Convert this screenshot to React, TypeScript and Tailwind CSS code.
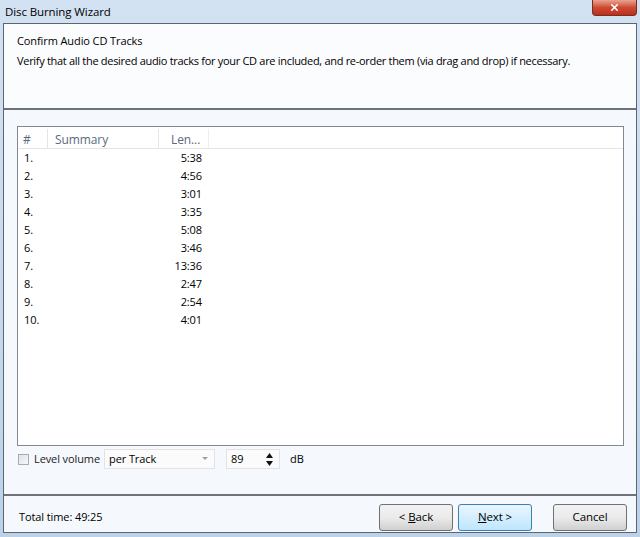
import { X } from "lucide-react";

const tracks = [
  ["1.", "5:38"],
  ["2.", "4:56"],
  ["3.", "3:01"],
  ["4.", "3:35"],
  ["5.", "5:08"],
  ["6.", "3:46"],
  ["7.", "13:36"],
  ["8.", "2:47"],
  ["9.", "2:54"],
  ["10.", "4:01"],
];

function WinButton({ children, active }: { children: React.ReactNode; active?: boolean }) {
  return (
    <button
      className={`h-[27px] w-[74px] rounded-[3px] border text-[11.5px] text-black ${
        active
          ? "border-[#3c7fb1] bg-gradient-to-b from-[#eaf6fd] to-[#bee6fd]"
          : "border-[#707070] bg-gradient-to-b from-[#f2f2f2] via-[#ebebeb] to-[#cfcfcf]"
      }`}
    >
      {children}
    </button>
  );
}

export default function App() {
  return (
    <div
      className="w-[640px] h-[537px] overflow-hidden bg-gradient-to-b from-[#d3e2f2] to-[#bcd2e9] flex flex-col"
      style={{ fontFamily: '"Open Sans", "Noto Sans", sans-serif' }}
    >
      {/* Title bar */}
      <div className="h-[23px] flex items-start justify-between pl-[5px] pr-[3px]">
        <span className="text-[11.5px] text-black leading-[23px] tracking-[-0.1px]">Disc Burning Wizard</span>
        <div className="w-[45px] h-[16px] rounded-b-[4px] border border-t-0 border-[#7d2a20] bg-gradient-to-b from-[#e8a392] via-[#cd4a32] to-[#b9311d] flex items-center justify-center">
          <X size={11} strokeWidth={3.5} color="white" />
        </div>
      </div>

      {/* Client */}
      <div className="mx-[3px] mb-[4px] flex-1 border border-[#5c6670] bg-[#f5f8fc] flex flex-col text-[11px] tracking-[-0.1px] text-black">
        {/* Header */}
        <div className="h-[86px] bg-[#fbfcfe] pl-[13px] pt-[8px] border-b-2 border-[#6e747b] whitespace-nowrap">
          <div className="leading-[17px]">Confirm Audio CD Tracks</div>
          <div className="leading-[17px] mt-[3px] tracking-[-0.3px]">
            Verify that all the desired audio tracks for your CD are included, and re-order them (via drag and drop) if necessary.
          </div>
        </div>

        {/* Body */}
        <div className="flex-1 flex flex-col pl-[13px] pr-[12px] pt-[16px]">
          <div className="h-[320px] border border-[#828790] bg-white flex flex-col">
            <div className="h-[22px] flex border-b border-[#e5e5e5] text-[#5c6a7b] text-[12px] leading-[22px] pt-[2px]">
              <div className="w-[30px] pl-[5px] border-r border-[#e5e5e5]">#</div>
              <div className="w-[111px] pl-[7px] border-r border-[#e5e5e5]">Summary</div>
              <div className="w-[50px] pl-[12px] border-r border-[#eeeeee]">Len...</div>
            </div>
            <div>
              {tracks.map(([n, len]) => (
                <div key={n} className="h-[18px] flex leading-[18px]">
                  <div className="w-[30px] pl-[6px]">{n}</div>
                  <div className="w-[111px]" />
                  <div className="w-[43px] text-right">{len}</div>
                </div>
              ))}
            </div>
          </div>

          <div className="flex items-center mt-[3px] h-[20px]">
            <div className="w-[11px] h-[11px] border border-[#a8adb4] bg-gradient-to-br from-[#e0e3e7] to-[#f6f7f8] ml-[1px]" />
            <span className="ml-[5px] text-[#222]">Level volume</span>
            <div className="ml-[4px] w-[111px] h-[20px] border border-[#e2e3e6] bg-[#fbfbfb] flex items-center justify-between pl-[4px] pr-[6px]">
              <span>per Track</span>
              <svg width="6" height="4" viewBox="0 0 6 4">
                <path d="M0 0 H6 L3 3 Z" fill="#9aa0a6" />
              </svg>
            </div>
            <div className="ml-[11px] w-[54px] h-[20px] border border-[#e2e3e6] bg-[#fbfbfb] flex items-center justify-between pl-[4px] pr-[6px]">
              <span>89</span>
              <svg width="7" height="13" viewBox="0 0 7 13">
                <path d="M3.5 0 L7 5 H0 Z" fill="#111" />
                <path d="M0 8 H7 L3.5 13 Z" fill="#111" />
              </svg>
            </div>
            <span className="ml-[10px]">dB</span>
          </div>
          <div className="flex-1" />
        </div>

        {/* Footer */}
        <div className="h-[38px] border-t-2 border-[#6e747b] flex items-center pl-[15px] pr-[9px] pt-[6px]">
          <span className="flex-1">Total time: 49:25</span>
          <div className="flex items-center gap-[5px]">
            <WinButton>
              &lt; <span className="underline">B</span>ack
            </WinButton>
            <WinButton active>
              <span className="underline">N</span>ext &gt;
            </WinButton>
          </div>
          <div className="ml-[21px]">
            <WinButton>Cancel</WinButton>
          </div>
        </div>
      </div>
    </div>
  );
}
